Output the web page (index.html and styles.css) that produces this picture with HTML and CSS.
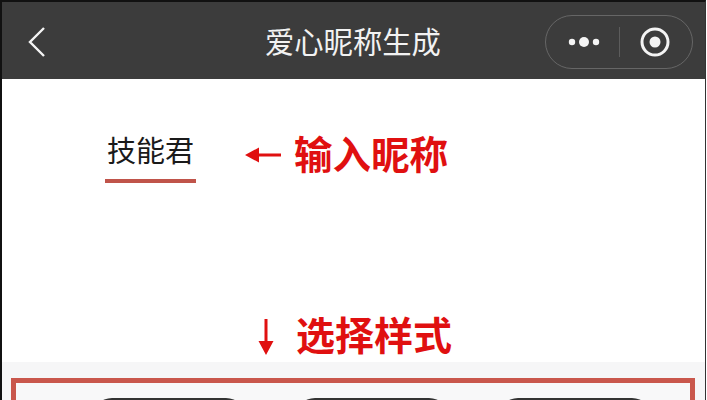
FILE: index.html
```html
<!DOCTYPE html>
<html lang="zh">
<head>
<meta charset="utf-8">
<title>爱心昵称生成</title>
<link rel="stylesheet" href="styles.css">
</head>
<body>
<div class="phone">
  <header class="nav">
    <svg class="back" width="18" height="32" viewBox="0 0 18 32"><path d="M16 2 L2 16 L16 30" fill="none" stroke="#f4f4f4" stroke-width="2.4"/></svg>
    <h1 class="title">爱心昵称生成</h1>
    <div class="capsule">
      <svg class="dots" width="32" height="12" viewBox="0 0 32 12"><circle cx="4" cy="6" r="3.2" fill="#f4f4f4"/><circle cx="16" cy="6" r="5" fill="#f4f4f4"/><circle cx="28" cy="6" r="3.2" fill="#f4f4f4"/></svg>
      <span class="sep"></span>
      <svg class="target" width="30" height="30" viewBox="0 0 30 30"><circle cx="15" cy="15" r="13" fill="none" stroke="#f4f4f4" stroke-width="3"/><circle cx="15" cy="15" r="5.5" fill="#f4f4f4"/></svg>
    </div>
  </header>
  <main class="main">
    <section class="input-row">
      <div class="field">技能君</div>
      <div class="hint hint-input">
        <svg width="36" height="16" viewBox="0 0 36 16"><path d="M0 8 L14 0.5 V6.5 H36 V9.5 H14 V15.5 Z" fill="#e01010"/></svg>
        <span class="hint-text">输入昵称</span>
      </div>
    </section>
    <div class="hint hint-style">
      <svg width="16" height="36" viewBox="0 0 16 36"><path d="M8 36 L0.5 22 H6.5 V0 H9.5 V22 H15.5 Z" fill="#e01010"/></svg>
      <span class="hint-text hint-text-wide">选择样式</span>
    </div>
    <section class="panel">
      <div class="frame">
        <div class="style-btn"></div>
        <div class="style-btn"></div>
        <div class="style-btn"></div>
      </div>
    </section>
  </main>
</div>
</body>
</html>
```
FILE: styles.css
```css
* { box-sizing: border-box; margin: 0; padding: 0; }
html, body { width: 707px; height: 400px; overflow: hidden; background: #fff; }
body { font-family: "Liberation Sans", "Noto Sans CJK SC", sans-serif; }
.phone {
  width: 706px;
  height: 400px;
  border-top: 2px solid #111;
  border-left: 2px solid #111;
  border-right: 1px solid #333;
  overflow: hidden;
  display: flex;
  flex-direction: column;
}
.nav {
  height: 77px;
  flex: none;
  background: #3c3c3c;
  display: flex;
  align-items: center;
  position: relative;
  padding: 0 12px 0 26px;
  justify-content: space-between;
}
.back { margin-top: 3px; }
.title {
  position: absolute;
  left: 263px;
  top: 21px;
  font-size: 29.3px;
  line-height: 40px;
  font-weight: 400;
  color: #f2f2f2;
  white-space: nowrap;
}
.capsule {
  width: 148px;
  height: 54px;
  margin-top: 3px;
  border: 1px solid #666;
  border-radius: 27px;
  display: flex;
  align-items: center;
  padding-left: 22px;
}
.sep { width: 1px; height: 30px; background: #5c5c5c; margin: 0 20px 0 19px; }
.main { flex: 1; display: flex; flex-direction: column; min-height: 0; }
.input-row { flex: none; display: flex; height: 233px; padding: 50px 0 0 103px; align-items: flex-start; }
.field {
  width: 91px;
  height: 54px;
  border-bottom: 4px solid #c0544a;
  font-size: 29px;
  line-height: 46px;
  text-align: center;
  color: #1a1a1a;
}
.hint { display: flex; align-items: center; }
.hint-text { font-size: 38.5px; line-height: 50px; font-weight: 700; color: #e01010; position: relative; top: 1px; }
.hint-text-wide { font-size: 39px; top: 0; }
.hint-input { margin: 1px 0 0 49px; gap: 13px; }
.hint-style { flex: none; height: 50px; margin: 0 0 0 256px; gap: 22px; }
.panel { flex: none; height: 38px; padding: 16px 10px 0 9px; background: #f6f6f7; }
.frame {
  height: 60px;
  border: 5px solid #c9574c;
  background: #f8f8f9;
  display: flex;
  padding: 15px 0 0 76px;
  gap: 49px;
}
.style-btn { width: 154px; height: 40px; background: #333; border-radius: 20px; }
```
